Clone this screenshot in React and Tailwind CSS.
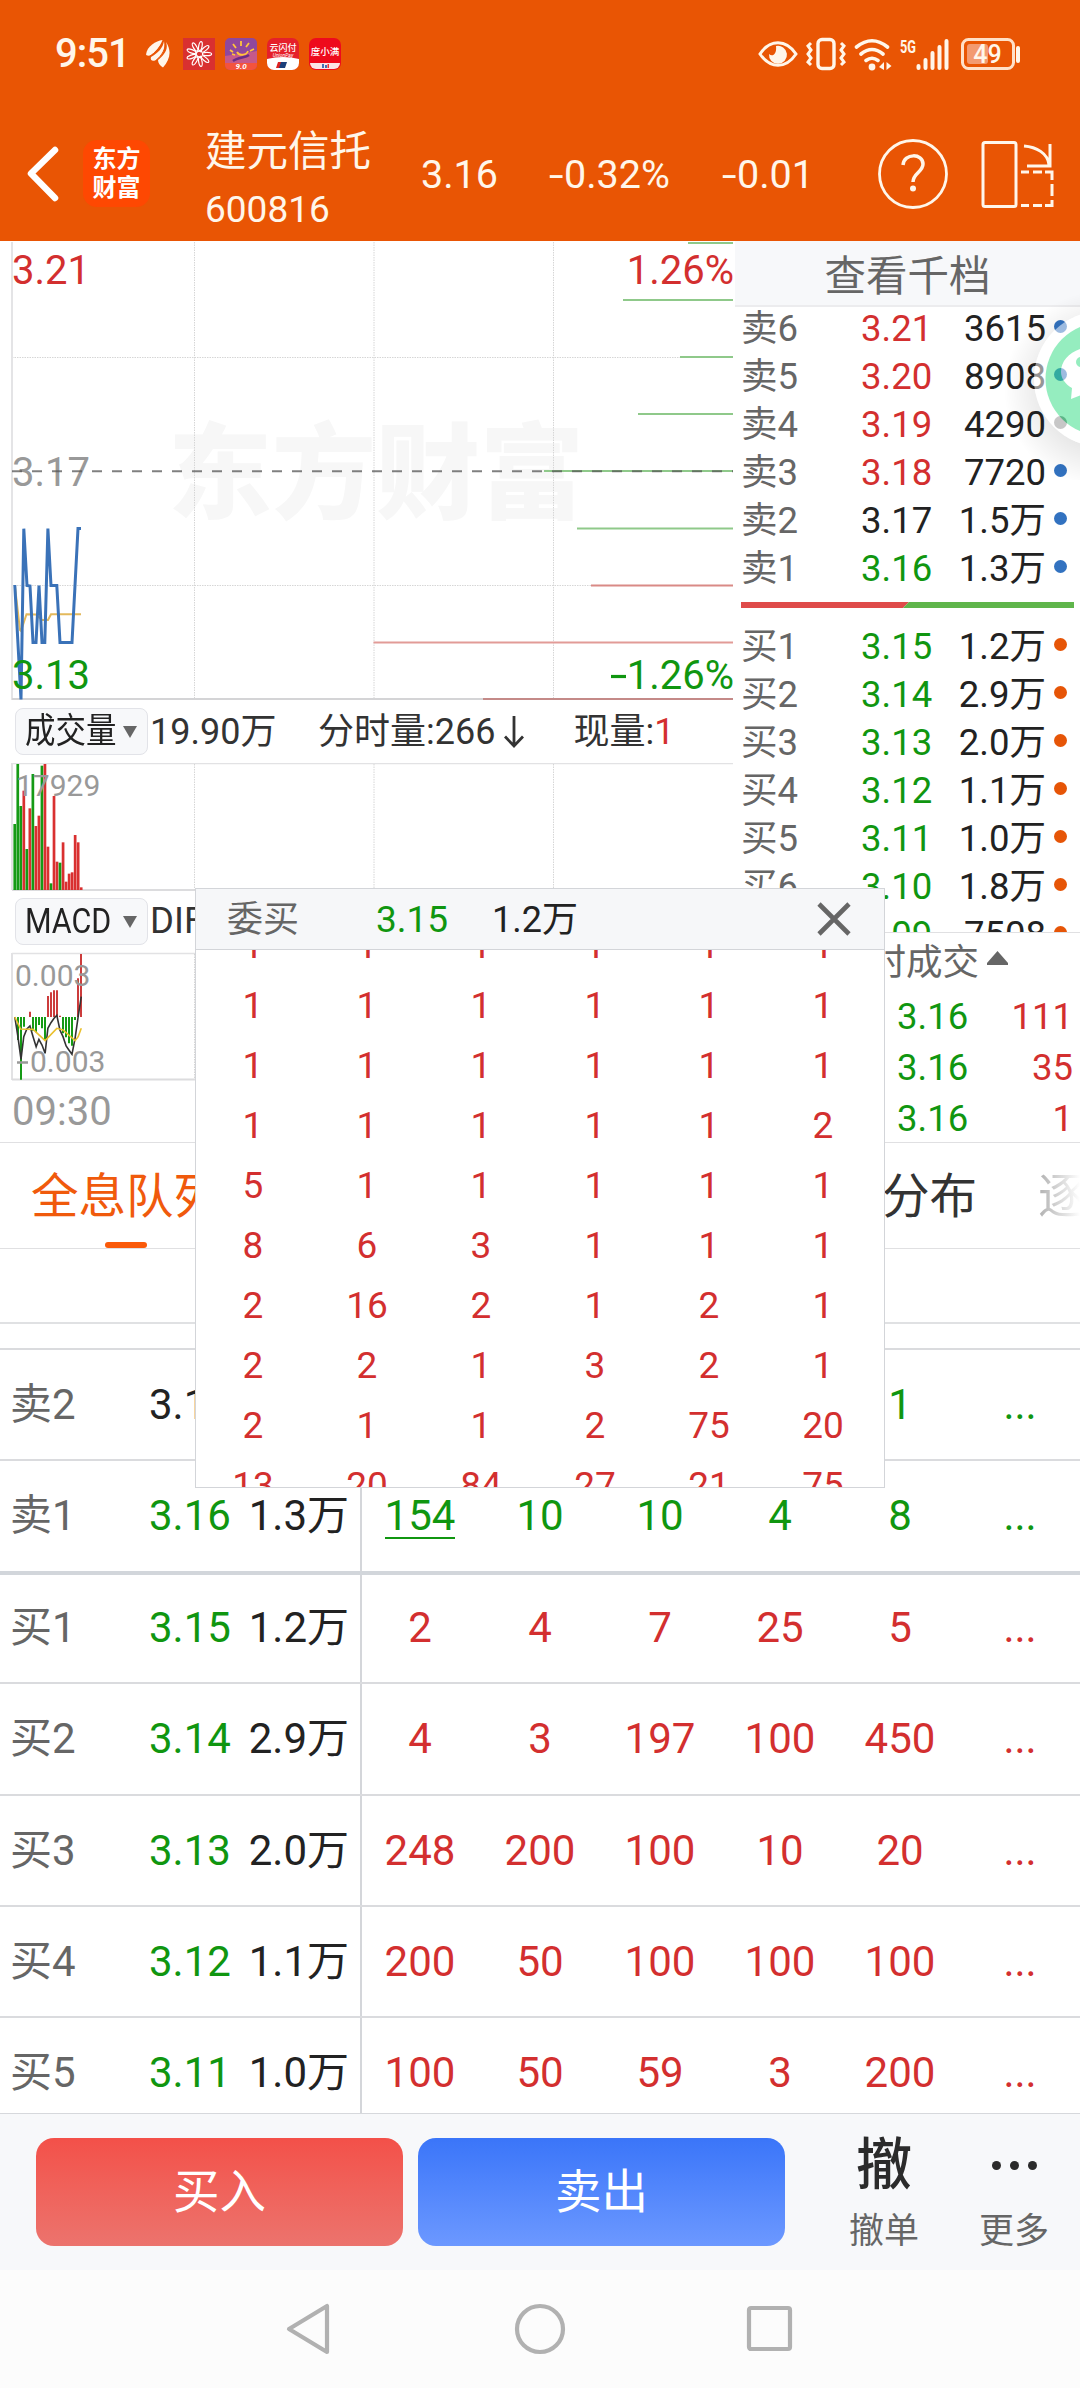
import React from "react";

const INK = "text-[#222222]";
const RED = "text-[#d32f2f]";
const GREEN = "text-[#109610]";
const GRAY = "text-[#666666]";

function StatusBar() {
  return (
    <div className="flex h-[108px] items-center pl-[55px] pr-[58px] text-[#fff6ea]">
      <span className="w-[91px] text-[40px] font-medium leading-none tracking-[-1px]">9:51</span>
      <svg width="24" height="28" viewBox="0 0 24 28" className="shrink-0" fill="currentColor">
        <path d="M16.500 0C10 1 1 6 0 14.500c1 1.500 3 1.500 5 .5C9 12 14 7 16.500 0Z" />
        <path d="M18 1c-1 7-6 12-13 16-1 3 1 4.500 4 3.500C16 17 20 9 18 1Z" />
        <path d="M20 2c3 8-3 14-8 18 0 3 2 6 5 7.500C24 20 26 11 20 2Z" />
        <path d="M17.500 0.500C14 8 9 13 3.500 16.500M19 1.500C20 9 16 15 10 20.500" stroke="#e95504" strokeWidth="1" fill="none" />
      </svg>
      <svg width="160" height="34" viewBox="0 0 160 34" className="ml-[13px] shrink-0">
        <rect x="0" y="1" width="32" height="32" fill="#d93030" />
        <g stroke="#fff" strokeWidth="1.2" fill="none">
          {[10, 50, 90, 130, 170, 210, 250, 290, 330].map((a) => (
            <ellipse key={a} cx="16" cy="9" rx="1.700" ry="4.600" transform={`rotate(${a} 16 17)`} />
          ))}
          <path d="M18 15a2.800 2.800 0 1 0 0 4" />
        </g>
        <rect x="42" y="1" width="32" height="32" rx="5" fill="#8f489c" />
        <path d="M42 19l32-5v12H42Z" fill="#c5598a" />
        <path d="M42 26h32v2a5 5 0 0 1-5 5H47a5 5 0 0 1-5-5Z" fill="#f4533c" />
        <path d="M47 13l3 2M50 7l3 4M58 4v5M66 6l-3 4M71 12l-4 2M54 15c2 4 9 4 11-1M49 17l3 1" stroke="#ffc53a" strokeWidth="1.8" fill="none" />
        <path d="M50 24c5-4 12-3 16-6" stroke="#6a2c86" strokeWidth="2.5" fill="none" />
        <text x="58" y="32" fontSize="8" fontStyle="italic" fontWeight="700" fill="#fff" textAnchor="middle">9.0</text>
        <rect x="84" y="1" width="32" height="32" rx="7" fill="#e5202a" />
        <path d="M84 22q16-4 32 0v4a7 7 0 0 1-7 7H91a7 7 0 0 1-7-7Z" fill="#fff" />
        <path d="M97 25h7l-2 6h-7Z" fill="#1b3f7b" />
        <path d="M95 25h3l-2 6h-3Z" fill="#d22" />
        <text x="100" y="13.5" fontSize="9" fontWeight="500" fill="#fff" textAnchor="middle">云闪付</text>
        <text x="100" y="19.5" fontSize="5" fontStyle="italic" fill="#fff" textAnchor="middle">UnionPay</text>
        <rect x="126" y="1" width="32" height="32" rx="7" fill="#ee0a1c" />
        <path d="M127 26h30a6 6 0 0 1-6 6h-18a6 6 0 0 1-6-6Z" fill="#fbe4e6" />
        <path d="M139 27h2v4h-2ZM142 28h2v3h-2Z" fill="#456fb5" />
        <path d="M144.500 27h1.500v4h-1.500Z" fill="#e33" />
        <text x="142" y="18" fontSize="9.500" fontWeight="500" fill="#fff" textAnchor="middle">度小满</text>
      </svg>
      <svg width="264" height="36" viewBox="0 0 264 36" className="ml-auto shrink-0" fill="none" stroke="currentColor">
        <path d="M2 18C12 3 28 3 38 18C28 33 12 33 2 18Z" strokeWidth="3" />
        <path d="M18 10a9 9 0 1 1-7 8c3 3 8 1 7-8Z" fill="currentColor" stroke="none" />
        <rect x="60" y="3.500" width="16" height="29" rx="4" strokeWidth="3.400" />
        <path d="M53 7l-3 3 3 4-3 4 3 4-3 4 3 3M83 7l3 3-3 4 3 4-3 4 3 4-3 3" strokeWidth="3" />
        <g strokeWidth="3.600" strokeLinecap="round">
          <path d="M98.500 11q15.500-12.500 31 0M103 18q11-9 22 0M108 24.500q6-4.500 12 0" />
        </g>
        <circle cx="114" cy="31" r="3.400" fill="currentColor" stroke="none" />
        <path d="M126 26v8l-5-3ZM128.500 26l5 4-5 4Z" fill="currentColor" stroke="none" />
        <text x="142" y="17" fontSize="18" fontWeight="700" fill="currentColor" stroke="none" textLength="16" lengthAdjust="spacingAndGlyphs">5G</text>
        <g strokeWidth="4" strokeLinecap="round">
          <path d="M160.500 30v2M167.500 24v8M174.500 17v15M181.500 11v21M188.500 5v27" />
        </g>
        <rect x="204.500" y="3.500" width="51" height="29" rx="6" strokeWidth="3" stroke="#ffe0c8" />
        <rect x="209" y="8" width="21" height="20" rx="3" fill="#f39a70" stroke="none" />
        <text x="229.500" y="27.300" fontSize="25" fontWeight="500" fill="currentColor" stroke="none" textAnchor="middle">49</text>
        <path d="M260 12v13" strokeWidth="4" strokeLinecap="round" />
      </svg>
    </div>
  );
}

function Header() {
  return (
    <div className="flex h-[132px] items-start text-[#fff6ea]">
      <svg width="36" height="60" viewBox="0 0 36 60" className="ml-[25px] mt-[36px] shrink-0" fill="none" stroke="#fff" strokeWidth="6.500" strokeLinecap="round" strokeLinejoin="round">
        <path d="M30 6L6 29.500L30 54" />
      </svg>
      <div className="ml-[22px] mt-[32px] flex h-[67px] w-[67px] flex-col items-center justify-center rounded-[14px] bg-[#fe4802] text-[24px] font-bold leading-[29px] text-white">
        <span>东方</span>
        <span>财富</span>
      </div>
      <div className="ml-[55px] mt-[19px] w-[216px]">
        <div className="h-[50px] text-[41.500px] leading-[50px]">建元信托</div>
        <div className="mt-[10px] h-[46px] text-[37px] leading-[46px]">600816</div>
      </div>
      <div className="mt-[42px] flex h-[50px] text-[39.500px] leading-[50px]">
        <span className="w-[125px]">3.16</span>
        <span className="w-[173px]"><Minus />0.32%</span>
        <span className="w-[158px]"><Minus />0.01</span>
      </div>
      <svg width="72" height="72" viewBox="0 0 72 72" className="mt-[29.500px] shrink-0" fill="none" stroke="currentColor">
        <circle cx="36" cy="36" r="33.500" strokeWidth="2.800" />
        <path d="M26 27C27 15 46 15 46 26C46 34 36 35 36 44" strokeWidth="3.500" />
        <circle cx="36" cy="50.500" r="3" fill="currentColor" stroke="none" />
      </svg>
      <svg width="76" height="72" viewBox="0 0 76 72" className="ml-[30px] mt-[30px] shrink-0" fill="none" stroke="currentColor" strokeWidth="3">
        <rect x="4" y="4.500" width="33" height="64" rx="2" />
        <path d="M45 8c12 1 24 7 25 19M71 6v22H48" />
        <path d="M42 34h8M54 34h9M66 34h7v8M73 46v12M73 62v5.500h-7M63 67.500h-9M50 67.500h-8" />
      </svg>
    </div>
  );
}

function Minus() {
  return <span className="mr-[3px] inline-block w-[15px] origin-left scale-x-[1.35] text-center">-</span>;
}

const AVG = "14.8,585 20,630 21,631 26.5,614.3 36,614.5 42,620 48,620 51,614.3 81,614.3";
const PRICE =
  "14.8,585 21,699.5 23.8,528.7 27,585.5 30,586 33,642.5 36,642.5 39,585.5 42,642.5 44.8,642.5 47.9,528.5 51,585.5 56.8,585.5 60,642.5 72,642.5 78,528.5 81,528.5";
const LEVELS = [
  [243, 688, "#8fc98a"],
  [300, 623, "#8fc98a"],
  [357, 680, "#8fc98a"],
  [414, 638, "#8fc98a"],
  [471, 544, "#8fc98a"],
  [528.5, 577, "#8fc98a"],
  [585.5, 591, "#d98a86"],
  [642.5, 373.5, "#e29b97"],
  [699, 483, "#c48a88"],
];

function Grid({ top, bottom }) {
  return (
    <g stroke="#d6d6d6" strokeDasharray="1.500 1">
      <path d={`M194.500 ${top}V${bottom}M374 ${top}V${bottom}M553.500 ${top}V${bottom}`} />
    </g>
  );
}

function PriceChart() {
  return (
    <svg width="735" height="460" viewBox="0 240 735 460" className="block" fontSize="40">
      <text x="168" y="511" fontSize="104" fontWeight="900" fill="#f7f7f7">东方财富</text>
      <Grid top={242} bottom={699} />
      <path d="M12 357.500H733M12 585.500H733" stroke="#d6d6d6" strokeDasharray="1.500 1" />
      <path d="M12 242V700" stroke="#e4e4e6" strokeWidth="2" />
      <path d="M12 699H733" stroke="#d4d4d6" strokeWidth="2" />
      {LEVELS.map(([y, x, color]) => (
        <path key={y} d={`M${x} ${y}H733`} stroke={color} strokeWidth="2" />
      ))}
      <text x="12" y="284" fill="#d32f2f">3.21</text>
      <text x="12" y="486" fill="#999">3.17</text>
      <path d="M12 471.300H733" stroke="#555" strokeOpacity="0.75" strokeWidth="2" strokeDasharray="10 10" />
      <text x="734" y="284" fill="#d32f2f" textAnchor="end">1.26%</text>
      <text x="734" y="688.500" fill="#109610" textAnchor="end">1.26%</text>
      <path d="M611 676.500h15" stroke="#109610" strokeWidth="3.200" />
      <polyline points={AVG} fill="none" stroke="#e3b95c" strokeWidth="2" />
      <polyline points={PRICE} fill="none" stroke="#3a72b8" strokeWidth="3" />
      <text x="12" y="688.500" fill="#109610">3.13</text>
    </svg>
  );
}

const VOLUME = [
  ["g", 372], ["g", 192], ["g", 318], ["r", 272], ["g", 447], ["r", 325], ["g", 222], ["r", 378],
  ["r", 347], ["g", 197], ["r", 192], ["r", 440], ["g", 550], ["r", 288], ["r", 485], ["g", 488],
  ["r", 427], ["r", 545], ["r", 521], ["r", 517], ["r", 405], ["r", 427], ["r", 562],
];

function VolumeChart() {
  return (
    <svg width="735" height="128" viewBox="0 763 735 128" className="block">
      <path d="M12 763.500H733" stroke="#e2e2e4" strokeWidth="1.500" />
      <path d="M12 763V890" stroke="#e2e2e4" strokeWidth="2" />
      <path d="M12 890H733" stroke="#dcdcde" strokeWidth="2" />
      <Grid top={764} bottom={890} />
      {VOLUME.map(([side, v], i) => (
        <rect key={i} x={13.4 + i * 3.02} y={700 + v / 3} width="2.700" height={190 - v / 3} fill={side === "g" ? "#159a15" : "#d93030"} />
      ))}
      <text x="16" y="796" fontSize="30" fill="#999">17929</text>
    </svg>
  );
}

const MACD_BARS = [
  [18, 1020], [21, 1139], [24, 980], [33, 992], [36, 997], [39, 975], [42, 985], [45, 1020],
  [63, 1000], [66, 1012], [69, 1030], [72, 1037], [75, 960],
  [30, 935], [48, 888], [51, 877], [54, 871], [57, 871], [60, 947], [78, 835], [81, 762],
];
const toPoints = (list) => list.map(([x, y]) => `${x / 2.904},${700 + y / 3}`).join(" ");
const DIFF_LINE = toPoints([
  [43, 951], [52, 1010], [61, 1078], [69, 1010], [78, 987], [87, 978], [96, 1010], [105, 1040], [113, 1018],
  [122, 1035], [131, 1060], [139, 985], [148, 968], [157, 955], [165, 946], [174, 990], [183, 1010], [192, 1038],
  [200, 1050], [209, 1063], [218, 1015], [227, 950], [236, 890],
]);
const DEA_LINE = toPoints([[43, 951], [60, 987], [96, 988], [131, 1022], [165, 985], [183, 990], [218, 1022], [227, 1010], [236, 985]]);

function MacdChart() {
  return (
    <svg width="735" height="129" viewBox="0 952 735 129" className="block">
      <path d="M12 953.500H733" stroke="#e2e2e4" strokeWidth="1.500" />
      <path d="M12 953V1080" stroke="#e2e2e4" strokeWidth="2" />
      <path d="M12 1079.500H733" stroke="#dcdcde" strokeWidth="2" />
      <Grid top={954} bottom={1079} />
      {MACD_BARS.map(([x, v]) => {
        const y = 700 + v / 3;
        return <path key={x} d={`M${x} 1017V${y}`} strokeWidth="2" stroke={y > 1017 ? "#159a15" : "#cc3c3c"} />;
      })}
      <text x="15" y="985.500" fontSize="30" fill="#999">0.003</text>
      <text x="30" y="1071.500" fontSize="30" fill="#999">0.003</text>
      <path d="M17 1062.500h11" stroke="#999" strokeWidth="2.500" />
      <polyline points={DIFF_LINE} fill="none" stroke="#333" strokeWidth="1.600" />
      <polyline points={DEA_LINE} fill="none" stroke="#eac02e" strokeWidth="1.600" />
    </svg>
  );
}

function Pill({ children }) {
  return (
    <div className={`ml-[15px] flex h-[47px] w-[133px] shrink-0 items-center rounded-[8px] border border-[#e2e3e8] bg-[#f7f8fa] pl-[9px] text-[35px] leading-[46px] ${INK}`}>
      <span className="w-[98px] origin-left scale-x-[0.87] whitespace-nowrap">{children}</span>
      <svg width="14" height="12" viewBox="0 0 14 12" className="shrink-0">
        <path d="M0 0h14L7 12Z" fill="#666" />
      </svg>
    </div>
  );
}

function ChartColumn() {
  return (
    <div className="w-[735px] shrink-0">
      <PriceChart />
      <div className="flex h-[63px] items-center whitespace-nowrap text-[36px] leading-[63px] text-[#333333]">
        <Pill>成交量</Pill>
        <span className="ml-[2px] w-[168px] translate-y-px">19.90万</span>
        <span className="translate-y-px">分时量:266</span>
        <svg width="20" height="34" viewBox="0 0 20 34" className="ml-[9px] shrink-0" fill="none" stroke="#333" strokeWidth="2.800">
          <path d="M10 1v30M1 21.500l9 9.500 9-9.500" />
        </svg>
        <span className="ml-[49px] translate-y-px">现量:<span className={RED}>1</span></span>
      </div>
      <VolumeChart />
      <div className="flex h-[61px] items-center text-[36.500px] text-[#333333]">
        <Pill>MACD</Pill>
        <span className="ml-[2px]">DIF</span>
      </div>
      <MacdChart />
      <div className="h-[61px] pl-[12px] text-[40px] leading-[62px] text-[#999999]">09:30</div>
    </div>
  );
}

const ASKS = [
  ["卖6", "3.21", "3615", RED],
  ["卖5", "3.20", "8908", RED],
  ["卖4", "3.19", "4290", RED, "bg-[#8a8a8a]"],
  ["卖3", "3.18", "7720", RED],
  ["卖2", "3.17", "1.5万", INK],
  ["卖1", "3.16", "1.3万", GREEN],
];
const BIDS = [
  ["买1", "3.15", "1.2万"],
  ["买2", "3.14", "2.9万"],
  ["买3", "3.13", "2.0万"],
  ["买4", "3.12", "1.1万"],
  ["买5", "3.11", "1.0万"],
  ["买6", "3.10", "1.8万"],
  ["买7", "3.09", "7508"],
];

function DepthRow({ name, price, qty, color, dot }) {
  return (
    <div className="flex h-[48px] items-center pl-[6px] text-[36.500px] leading-[49px]">
      <span className={`w-[120px] ${GRAY}`}>{name}</span>
      <span className={`w-[72px] ${color}`}>{price}</span>
      <span className={`w-[113px] text-right ${INK}`}>{qty}</span>
      <span className={`-mt-[4px] ml-[8px] h-[13px] w-[13px] rounded-full ${dot}`} />
    </div>
  );
}

function DepthColumn() {
  return (
    <div className="w-[345px]">
      <div className={`h-[67px] border-b-2 border-[#ececee] bg-[#f7f8fa] text-center text-[41.500px] leading-[73px] ${GRAY}`}>查看千档</div>
      <div className="-mt-[3px] h-[628px] overflow-hidden">
        {ASKS.map(([name, price, qty, color, dot]) => (
          <DepthRow key={name} name={name} price={price} qty={qty} color={color} dot={dot || "bg-[#3272c0]"} />
        ))}
        <svg width="333" height="6" viewBox="0 0 333 6" className="mb-[14px] ml-[6px] mt-[10px] block">
          <path d="M0 0h168l-6 6H0Z" fill="#df4b4a" />
          <path d="M168 0h165v6H162Z" fill="#5fb54b" />
        </svg>
        {BIDS.map(([name, price, qty]) => (
          <DepthRow key={name} name={name} price={price} qty={qty} color={GREEN} dot="bg-[#e65507]" />
        ))}
      </div>
      <div className={`flex h-[59px] items-center border-t border-[#e0e0e2] pl-[98px] text-[36.500px] leading-[58px] ${GRAY}`}>
        <span className="translate-y-px">分时成交</span>
        <svg width="21" height="14" viewBox="0 0 21 14" className="-mt-[8px] ml-[8px]">
          <path d="M10.500 0L21 12v2H0v-2Z" fill="#666" />
        </svg>
      </div>
      {["111", "35", "1"].map((n) => (
        <div key={n} className="flex h-[51px] justify-between pl-[162px] pr-[7px] text-[36.500px] leading-[51px]">
          <span className={GREEN}>3.16</span>
          <span className={RED}>{n}</span>
        </div>
      ))}
    </div>
  );
}

function Tabs() {
  return (
    <div className="flex h-[107px] justify-between border-y border-[#e0e0e2] text-[47.500px] leading-[108px]">
      <div className="ml-[30px] flex w-[192px] flex-col items-center text-[#f05a0c]">
        <span className="h-[99px] whitespace-nowrap">全息队列</span>
        <span className="h-[6px] w-[42px] rounded-full bg-[#fa5a0a]" />
      </div>
      <div className="flex overflow-hidden text-[#333333]">
        <span className="w-[156px]">分布</span>
        <span className="w-[42px] overflow-hidden bg-gradient-to-r from-[#b0b0b0] to-white bg-clip-text text-transparent">逐</span>
      </div>
    </div>
  );
}

const QUEUE = [
  ["卖2", "3.17", "1.5万", INK, GREEN, ["6", "2", "10", "5", "1"]],
  ["卖1", "3.16", "1.3万", GREEN, GREEN, ["154", "10", "10", "4", "8"]],
  ["买1", "3.15", "1.2万", GREEN, RED, ["2", "4", "7", "25", "5"]],
  ["买2", "3.14", "2.9万", GREEN, RED, ["4", "3", "197", "100", "450"]],
  ["买3", "3.13", "2.0万", GREEN, RED, ["248", "200", "100", "10", "20"]],
  ["买4", "3.12", "1.1万", GREEN, RED, ["200", "50", "100", "100", "100"]],
  ["买5", "3.11", "1.0万", GREEN, RED, ["100", "50", "59", "3", "200"]],
];

function QueueTable() {
  return (
    <div className="h-[765px] overflow-hidden">
      {QUEUE.map(([name, price, qty, priceColor, cellColor, cells]) => (
        <div
          key={name}
          className={`flex h-[111.400px] text-[42px] ${name === "买1" ? "border-t-4 border-[#d2d6db] leading-[105px]" : "border-t-2 border-[#dadbde] leading-[109px]"}`}
        >
          <div className="flex w-[362px] shrink-0 border-r-2 border-[#d4d6da] pl-[10px]">
            <span className={`w-[139px] ${GRAY}`}>{name}</span>
            <span className={`w-[90px] ${priceColor}`}>{price}</span>
            <span className={`w-[110px] text-right ${INK}`}>{qty}</span>
          </div>
          <div className={`-ml-[2px] grid flex-1 grid-cols-6 text-center ${cellColor}`}>
            {cells.map((c, i) => (
              <span key={i}>
                {c === "154" ? <span className="inline-block h-[78px] border-b-2 border-[#109610]">{c}</span> : c}
              </span>
            ))}
            <span>...</span>
          </div>
        </div>
      ))}
    </div>
  );
}

const POPUP_ROWS = [
  [1, 1, 1, 1, 1, 1],
  [1, 1, 1, 1, 1, 1],
  [1, 1, 1, 1, 1, 1],
  [1, 1, 1, 1, 1, 2],
  [5, 1, 1, 1, 1, 1],
  [8, 6, 3, 1, 1, 1],
  [2, 16, 2, 1, 2, 1],
  [2, 2, 1, 3, 2, 1],
  [2, 1, 1, 2, 75, 20],
  [13, 20, 84, 27, 21, 75],
];

function Popup() {
  return (
    <div className="absolute left-[195px] top-[888px] flex h-[600px] w-[690px] flex-col overflow-hidden border border-[#d3d5d9] bg-white text-[37px]">
      <div className="flex h-[61px] shrink-0 items-center border-b border-[#d3d5d9] bg-[#f6f7f9] pl-[31px] leading-[60px]">
        <span className={`w-[149px] translate-y-px text-[36px] ${GRAY}`}>委买</span>
        <span className={`w-[116px] translate-y-px ${GREEN}`}>3.15</span>
        <span className={`w-[325px] translate-y-px text-[36px] ${INK}`}>1.2万</span>
        <svg width="34" height="34" viewBox="0 0 34 34" fill="none" stroke="#666" strokeWidth="4.600">
          <path d="M2 2L32 32M32 2L2 32" />
        </svg>
      </div>
      <div className={`-mt-[34px] grid w-[684px] shrink-0 grid-cols-6 text-center leading-[60px] ${RED} [clip-path:inset(34px_0_0_0)]`}>
        {POPUP_ROWS.flat().map((n, i) => (
          <span key={i} className="h-[60px]">{n}</span>
        ))}
      </div>
    </div>
  );
}

function ChatBubble() {
  return (
    <svg width="80" height="200" viewBox="1000 280 80 200" className="absolute left-[1000px] top-[280px]">
      <defs>
        <radialGradient id="halo">
          <stop offset="0.600" stopColor="#000" stopOpacity="0.090" />
          <stop offset="1" stopColor="#000" stopOpacity="0" />
        </radialGradient>
        <mask id="outside">
          <rect x="1000" y="280" width="80" height="200" fill="#fff" />
          <circle cx="1102" cy="379" r="68" fill="#000" />
        </mask>
      </defs>
      <circle cx="1102" cy="389" r="98" fill="url(#halo)" mask="url(#outside)" />
      <g opacity="0.52">
        <circle cx="1102" cy="379" r="68" fill="#fff" />
        <circle cx="1102" cy="379" r="56.500" fill="#35dd86" />
        <path d="M1071 399l1-11c-7-4-11-10-11-16 0-14 14-25 32-25v50c-5 0-9-1-12-2Z" fill="#fff" />
        <circle cx="1081" cy="362" r="5" fill="#35dd86" />
      </g>
    </svg>
  );
}

function ActionBar() {
  return (
    <div className="flex h-[157px] items-start border-t border-[#d6d8dc] bg-[#f7f8fa] pl-[36px]">
      <button className="mt-[24px] h-[108px] w-[367px] rounded-[18px] bg-gradient-to-b from-[#f35049] to-[#ec736d] text-[46.500px] leading-[108px] text-white">买入</button>
      <button className="ml-[15px] mt-[24px] h-[108px] w-[367px] rounded-[18px] bg-gradient-to-b from-[#3a75f9] to-[#6c98ff] text-[46.500px] leading-[108px] text-white">卖出</button>
      <div className="ml-[34px] flex w-[130px] flex-col items-center pt-[15px]">
        <span className="h-[72px] text-[56px] font-medium leading-[73px] text-[#2b2b2b]">撤</span>
        <span className={`text-[35px] leading-[61px] ${GRAY}`}>撤单</span>
      </div>
      <div className="flex w-[130px] flex-col items-center pt-[15px]">
        <span className="flex h-[72px] items-center gap-[9px]">
          <i className="h-[9px] w-[9px] rounded-full bg-[#2b2b2b]" />
          <i className="h-[9px] w-[9px] rounded-full bg-[#2b2b2b]" />
          <i className="h-[9px] w-[9px] rounded-full bg-[#2b2b2b]" />
        </span>
        <span className={`text-[35px] leading-[61px] ${GRAY}`}>更多</span>
      </div>
    </div>
  );
}

function NavBar() {
  return (
    <div className="flex h-[118px] items-center justify-center gap-[178px] bg-[#fcfcfc]">
      <svg width="54" height="54" viewBox="0 0 54 54" fill="none" stroke="#b1b1b1" strokeWidth="4.200" strokeLinejoin="round">
        <path d="M46 4V50L8 27Z" />
      </svg>
      <svg width="54" height="54" viewBox="0 0 54 54" fill="none" stroke="#b1b1b1" strokeWidth="4.200">
        <circle cx="27" cy="27" r="23" />
      </svg>
      <svg width="54" height="54" viewBox="0 0 54 54" fill="none" stroke="#b1b1b1" strokeWidth="4.200">
        <rect x="4" y="6" width="41" height="41" rx="2" />
      </svg>
    </div>
  );
}

export default function App() {
  return (
    <div className="relative h-[2388px] w-[1080px] overflow-hidden bg-white font-[Roboto,'Noto_Sans_CJK_SC',sans-serif]">
      <div className="h-[241px] bg-[#e95504]">
        <StatusBar />
        <Header />
      </div>
      <div className="flex h-[901px] overflow-hidden">
        <div className="-mt-px flex">
          <ChartColumn />
          <DepthColumn />
        </div>
      </div>
      <Tabs />
      <div className="h-[73px]" />
      <div className="h-[26px] border-t-2 border-[#e0e1e3]" />
      <QueueTable />
      <ActionBar />
      <NavBar />
      <Popup />
      <ChatBubble />
    </div>
  );
}
